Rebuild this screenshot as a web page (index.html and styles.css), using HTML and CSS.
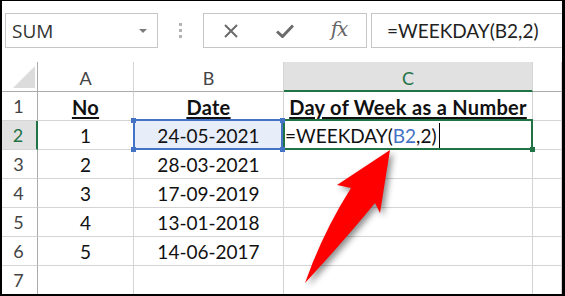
FILE: index.html
```html
<!DOCTYPE html>
<html lang="en">
<head>
    <meta charset="UTF-8">
    <title>WEEKDAY</title>
    <link rel="stylesheet" href="styles.css">
</head>
<body>
    <div class="frame">
        <div class="fbar">
            <div class="namebox"><span>SUM</span><span class="caret"></span></div>
            <div class="grip"><i></i><i></i><i></i></div>
            <div class="btns">
                <svg width="14" height="14" viewBox="0 0 14 14"><path d="M1 1L13 13M13 1L1 13" stroke="#6b6b6b" stroke-width="2" fill="none"/></svg>
                <svg width="18" height="14" viewBox="0 0 18 14"><path d="M1 7.5L6.5 12.5L17 1.5" stroke="#6b6b6b" stroke-width="3" fill="none"/></svg>
                <span class="fx">fx</span>
            </div>
            <div class="formula">=WEEKDAY(B2,2)</div>
        </div>

        <div class="sheet">
            <div class="hd corner"></div>
            <div class="hd col">A</div>
            <div class="hd col">B</div>
            <div class="hd col sel">C</div>
            <div class="hd col"></div>

            <div class="hd row">1</div>
            <div class="cell title">No</div>
            <div class="cell title">Date</div>
            <div class="cell title">Day of Week as a Number</div>
            <div class="cell"></div>

            <div class="hd row sel">2</div>
            <div class="cell">1</div>
            <div class="cell ref">24-05-2021<b class="h tl"></b><b class="h bl"></b><b class="h tr"></b><b class="h br"></b></div>
            <div class="cell edit">=WEEKDAY(<span class="blue">B2</span>,2)<span class="caretline"></span><b class="fill"></b></div>
            <div class="cell"></div>

            <div class="hd row">3</div>
            <div class="cell">2</div>
            <div class="cell">28-03-2021</div>
            <div class="cell"></div>
            <div class="cell"></div>

            <div class="hd row">4</div>
            <div class="cell">3</div>
            <div class="cell">17-09-2019</div>
            <div class="cell"></div>
            <div class="cell"></div>

            <div class="hd row">5</div>
            <div class="cell">4</div>
            <div class="cell">13-01-2018</div>
            <div class="cell"></div>
            <div class="cell"></div>

            <div class="hd row">6</div>
            <div class="cell">5</div>
            <div class="cell">14-06-2017</div>
            <div class="cell"></div>
            <div class="cell"></div>

            <div class="hd row">7</div>
            <div class="cell"></div>
            <div class="cell"></div>
            <div class="cell"></div>
            <div class="cell"></div>

            <!-- red pointer over the grid -->
            <svg class="arrow" width="560" height="232" viewBox="2 62 560 232">
                <path d="M305 283 Q323 232 351 188 L337 185 L390 150 L380 213 L375 203 Q343 242 305 283 Z" fill="#ff0000"/>
            </svg>
        </div>
    </div>
</body>
</html>
```

FILE: styles.css
```css
body {
    margin: 0;
    padding: 0;
    background: #fff;
}

.frame {
    width: 565px;
    height: 296px;
    box-sizing: border-box;
    border-style: solid;
    border-color: #000;
    border-width: 1px 3px 2px 2px;
    background: #fff;
    overflow: hidden;
    display: flex;
    flex-direction: column;
}

/* formula bar */
.fbar {
    height: 61px;
    flex: none;
    display: flex;
    align-items: flex-start;
    padding-top: 12px;
    box-sizing: border-box;
}
.namebox {
    margin-left: 3px;
    width: 153px;
    height: 35px;
    box-sizing: border-box;
    border: 1px solid #c6c6c6;
    display: flex;
    align-items: center;
    justify-content: space-between;
    padding: 0 10px 0 6px;
    font-family: "Open Sans", sans-serif;
    font-size: 19px;
    color: #333;
}
.caret {
    width: 0;
    height: 0;
    border-left: 4px solid transparent;
    border-right: 4px solid transparent;
    border-top: 4px solid #7a7a7a;
}
.grip {
    width: 45px;
    height: 35px;
    display: flex;
    flex-direction: column;
    align-items: center;
    justify-content: center;
    gap: 3px;
}
.grip i {
    width: 3px;
    height: 3px;
    background: #b4b4b4;
}
.btns {
    width: 164px;
    height: 35px;
    box-sizing: border-box;
    border: 1px solid #c6c6c6;
    display: grid;
    grid-template-columns: repeat(3, 1fr);
    align-items: center;
    justify-items: center;
}
.fx {
    font-family: "DejaVu Serif", serif;
    font-style: italic;
    font-size: 20px;
    color: #666;
    margin-top: -3px;
    letter-spacing: -1px;
}
.formula {
    margin-left: 4px;
    flex: 1;
    height: 35px;
    box-sizing: border-box;
    border: 1px solid #c6c6c6;
    border-right: none;
    padding-left: 15px;
    display: flex;
    align-items: center;
    font-family: "Lato", sans-serif;
    font-size: 19px;
    color: #222;
}

/* sheet */
.sheet {
    flex: 1;
    position: relative;
    display: grid;
    grid-template-columns: 36px 96px 150px 249px 1fr;
    grid-template-rows: 30px repeat(7, 29px);
    font-family: "Lato", sans-serif;
    font-size: 19px;
}
.hd, .cell {
    box-sizing: border-box;
    display: flex;
    align-items: center;
    justify-content: center;
}
.hd {
    color: #444;
    font-size: 18px;
}
.corner {
    position: relative;
    border-right: 1px solid #ababab;
    border-bottom: 1px solid #ababab;
}
.corner::after {
    content: "";
    position: absolute;
    right: 2px;
    bottom: 3px;
    width: 22px;
    height: 22px;
    background: #dcdcdc;
    clip-path: polygon(100% 0, 100% 100%, 0 100%);
}
.col {
    border-right: 1px solid #d5d5d5;
    border-bottom: 1px solid #ababab;
    padding-top: 3px;
}
.col.sel {
    background: #e1e1e1;
    color: #217346;
    border-bottom: 2px solid #217346;
}
.row {
    border-right: 1px solid #ababab;
    border-bottom: 1px solid #d5d5d5;
    padding-right: 2px;
}
.row.sel {
    background: #e1e1e1;
    color: #217346;
    border-right: 2px solid #217346;
}
.cell {
    border-right: 1px solid #d4d4d4;
    border-bottom: 1px solid #d4d4d4;
    color: #111;
    padding-top: 1px;
}
.title {
    font-size: 20px;
    font-weight: bold;
    letter-spacing: 0.3px;
    text-decoration: underline;
    text-underline-offset: 2px;
}

/* referenced cell B2 */
.ref {
    position: relative;
    background: #e8eef9;
}
.ref::after {
    content: "";
    position: absolute;
    top: -2px;
    left: -1px;
    right: 0;
    bottom: -1px;
    border: 2px solid #4472c4;
}
.h {
    position: absolute;
    width: 5px;
    height: 5px;
    background: #4472c4;
    z-index: 2;
}
.tl { top: -3px; left: -3px; }
.bl { bottom: -3px; left: -3px; }
.tr { top: -3px; right: -2px; }
.br { bottom: -3px; right: -2px; }

/* cell being edited C2 */
.edit {
    position: relative;
    justify-content: flex-start;
    padding-left: 1px;
}
.edit::after {
    content: "";
    position: absolute;
    top: -2px;
    left: -1px;
    right: -1px;
    bottom: -1px;
    border: 2px solid #217346;
}
.blue {
    color: #4472c4;
}
.caretline {
    width: 1px;
    height: 26px;
    background: #000;
    margin-left: 2px;
}
.fill {
    position: absolute;
    right: -3px;
    bottom: -3px;
    width: 5px;
    height: 5px;
    background: #217346;
    z-index: 2;
}

.arrow {
    position: absolute;
    left: 0;
    top: 0;
    filter: drop-shadow(3px 3px 3px rgba(0, 0, 0, 0.45));
}
```
